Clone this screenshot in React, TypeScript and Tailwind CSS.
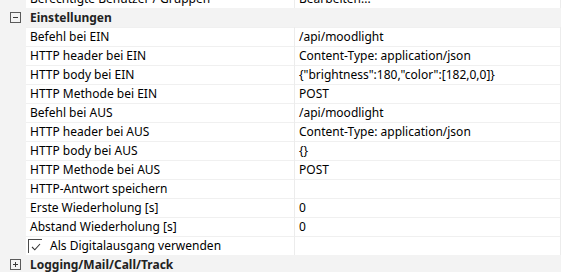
const font = { fontFamily: '"Segoe UI", "Noto Sans", sans-serif' }

type Row = { name: string; value: string }

const rows: Row[] = [
  { name: 'Befehl bei EIN', value: '/api/moodlight' },
  { name: 'HTTP header bei EIN', value: 'Content-Type: application/json' },
  { name: 'HTTP body bei EIN', value: '{"brightness":180,"color":[182,0,0]}' },
  { name: 'HTTP Methode bei EIN', value: 'POST' },
  { name: 'Befehl bei AUS', value: '/api/moodlight' },
  { name: 'HTTP header bei AUS', value: 'Content-Type: application/json' },
  { name: 'HTTP body bei AUS', value: '{}' },
  { name: 'HTTP Methode bei AUS', value: 'POST' },
  { name: 'HTTP-Antwort speichern', value: '' },
  { name: 'Erste Wiederholung [s]', value: '0' },
  { name: 'Abstand Wiederholung [s]', value: '0' },
]

function ToggleBox({ open }: { open: boolean }) {
  return (
    <div className="w-[11px] h-[11px] border border-[#5a5a5a] relative bg-transparent">
      <div className="absolute left-[2px] right-[2px] top-[4px] h-px bg-[#3a3a3a]" />
      {!open && <div className="absolute top-[2px] bottom-[2px] left-[4px] w-px bg-[#3a3a3a]" />}
    </div>
  )
}

function PropRow({ name, value, children }: { name?: string; value: string; children?: React.ReactNode }) {
  return (
    <div className="flex h-[19px]">
      <div className="w-[26px] shrink-0 bg-[#f3f3f3]" />
      <div className="w-[268px] shrink-0 bg-white border-t border-[#f0f0f0] flex items-center pl-[4px] text-[12px] text-black whitespace-nowrap overflow-hidden">
        {children ?? name}
      </div>
      <div className="w-px shrink-0 bg-[#ececec]" />
      <div className="flex-1 bg-white border-t border-[#f0f0f0] flex items-center pl-[4px] text-[12px] text-black whitespace-nowrap overflow-hidden">
        {value}
      </div>
      <div className="w-px shrink-0 bg-[#ececec]" />
    </div>
  )
}

function GroupRow({ title, open }: { title: string; open: boolean }) {
  return (
    <div className="flex h-[19px] bg-[#f3f3f3] items-center">
      <div className="w-[26px] shrink-0 flex justify-center pl-[8px] pr-[4px]">
        <ToggleBox open={open} />
      </div>
      <div className="pl-[4px] text-[12px] font-bold text-[#222] whitespace-nowrap">{title}</div>
    </div>
  )
}

export default function App() {
  return (
    <div className="w-[561px] h-[272px] overflow-hidden bg-[#f3f3f3]" style={font}>
      <div className="mt-[-11px]">
        <PropRow name="Berechtigte Benutzer / Gruppen" value="Bearbeiten..." />
        <GroupRow title="Einstellungen" open />
        {rows.map((r) => (
          <PropRow key={r.name} name={r.name} value={r.value} />
        ))}
        <PropRow value="">
          <div className="flex items-center">
            <div className="w-[14px] h-[14px] border-l border-t border-[#4a4a4a] ml-[-2px] flex items-center justify-center">
              <svg width="10" height="8" viewBox="0 0 10 8" fill="none">
                <path d="M1 4 L3.8 6.8 L9 1" stroke="#333" strokeWidth="1.1" />
              </svg>
            </div>
            <span className="ml-[8px]">Als Digitalausgang verwenden</span>
          </div>
        </PropRow>
        <GroupRow title="Logging/Mail/Call/Track" open={false} />
      </div>
    </div>
  )
}
